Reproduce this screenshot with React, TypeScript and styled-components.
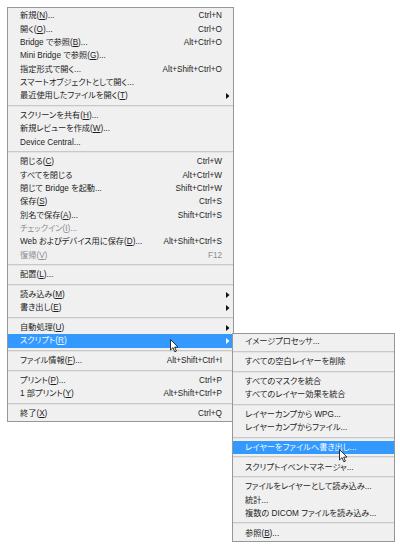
import React from "react";
import styled, { createGlobalStyle } from "styled-components";

const Global = createGlobalStyle`
  html, body { margin: 0; padding: 0; background: #ffffff; }
  body { font-family: "Liberation Sans", "Noto Sans CJK JP", sans-serif; }
`;

type Item =
  | { sep: true }
  | {
      sep?: false;
      label: React.ReactNode;
      shortcut?: string;
      arrow?: boolean;
      disabled?: boolean;
      active?: boolean;
    };

const Page = styled.div`
  padding: 7px 0 0 7px;
  width: 400px;
  height: 547px;
  box-sizing: border-box;
`;

const Stage = styled.div`
  position: relative;
  width: 227px;
`;

const Menu = styled.div<{ $width: number }>`
  width: ${(p) => p.$width}px;
  box-sizing: border-box;
  background: #f0f0f0;
  border: 1px solid #979797;
  padding: 1.3px 0 1px 0;
  display: flex;
  flex-direction: column;
`;

const SubMenuWrap = styled.div`
  position: absolute;
  left: 225px;
  top: 326px;
`;

const Row = styled.div<{ $active?: boolean; $disabled?: boolean }>`
  height: 13.333px;
  display: grid;
  grid-template-columns: 1fr auto 8px;
  align-items: center;
  padding: 0 3px 0 12px;
  font-size: 8.2px;
  font-feature-settings: "palt";
  line-height: 13.333px;
  white-space: nowrap;
  background: ${(p) => (p.$active ? "#3399ff" : "transparent")};
  color: ${(p) => (p.$active ? "#f4f9ff" : p.$disabled ? "#8d8d8d" : "#1e1e1e")};
`;

const Label = styled.span`
  overflow: visible;
`;

const Shortcut = styled.span`
  text-align: right;
  padding-left: 10px;
`;

const ArrowCell = styled.span`
  grid-column: 3;
  display: flex;
  justify-content: flex-end;
  align-items: center;
`;

const Separator = styled.div`
  height: 6.4px;
  display: flex;
  align-items: center;
`;

const SepLine = styled.div`
  flex: 1;
  height: 0;
  border-top: 1px solid #c8c8c8;
  border-bottom: 1px solid #e4e4e4;
`;

const Cursor = styled.svg<{ $x: number; $y: number }>`
  position: absolute;
  left: ${(p) => p.$x}px;
  top: ${(p) => p.$y}px;
  width: 9px;
  height: 14px;
  overflow: visible;
`;

const Arrow = ({ color }: { color: string }) => (
  <svg width="4" height="6" viewBox="0 0 4 6">
    <path d="M0 0 L3.5 3 L0 6 Z" fill={color} />
  </svg>
);

const U = styled.u`
  text-decoration: underline;
  text-underline-offset: 1px;
`;

const m = (pre: string, key: string, post = "") => (
  <>
    {pre}(<U>{key}</U>){post}
  </>
);

const mainItems: Item[] = [
  { label: m("新規", "N", "..."), shortcut: "Ctrl+N" },
  { label: m("開く", "O", "..."), shortcut: "Ctrl+O" },
  { label: m("Bridge で参照", "B", "..."), shortcut: "Alt+Ctrl+O" },
  { label: m("Mini Bridge で参照", "G", "...") },
  { label: "指定形式で開く...", shortcut: "Alt+Shift+Ctrl+O" },
  { label: "スマートオブジェクトとして開く..." },
  { label: m("最近使用したファイルを開く", "T"), arrow: true },
  { sep: true },
  { label: m("スクリーンを共有", "H", "...") },
  { label: m("新規レビューを作成", "W", "...") },
  { label: "Device Central..." },
  { sep: true },
  { label: m("閉じる", "C"), shortcut: "Ctrl+W" },
  { label: "すべてを閉じる", shortcut: "Alt+Ctrl+W" },
  { label: "閉じて Bridge を起動...", shortcut: "Shift+Ctrl+W" },
  { label: m("保存", "S"), shortcut: "Ctrl+S" },
  { label: m("別名で保存", "A", "..."), shortcut: "Shift+Ctrl+S" },
  { label: m("チェックイン", "I", "..."), disabled: true },
  { label: m("Web およびデバイス用に保存", "D", "..."), shortcut: "Alt+Shift+Ctrl+S" },
  { label: m("復帰", "V"), shortcut: "F12", disabled: true },
  { sep: true },
  { label: m("配置", "L", "...") },
  { sep: true },
  { label: m("読み込み", "M"), arrow: true },
  { label: m("書き出し", "E"), arrow: true },
  { sep: true },
  { label: m("自動処理", "U"), arrow: true },
  { label: m("スクリプト", "R"), arrow: true, active: true },
  { sep: true },
  { label: m("ファイル情報", "F", "..."), shortcut: "Alt+Shift+Ctrl+I" },
  { sep: true },
  { label: m("プリント", "P", "..."), shortcut: "Ctrl+P" },
  { label: m("1 部プリント", "Y"), shortcut: "Alt+Shift+Ctrl+P" },
  { sep: true },
  { label: m("終了", "X"), shortcut: "Ctrl+Q" },
];

const subItems: Item[] = [
  { label: "イメージプロセッサ..." },
  { sep: true },
  { label: "すべての空白レイヤーを削除" },
  { sep: true },
  { label: "すべてのマスクを統合" },
  { label: "すべてのレイヤー効果を統合" },
  { sep: true },
  { label: "レイヤーカンプから WPG..." },
  { label: "レイヤーカンプからファイル..." },
  { sep: true },
  { label: "レイヤーをファイルへ書き出し...", active: true },
  { sep: true },
  { label: "スクリプトイベントマネージャ..." },
  { sep: true },
  { label: "ファイルをレイヤーとして読み込み..." },
  { label: "統計..." },
  { label: "複数の DICOM ファイルを読み込み..." },
  { sep: true },
  { label: m("参照", "B", "...") },
];

const MenuList = ({ items, width }: { items: Item[]; width: number }) => (
  <Menu $width={width}>
    {items.map((it, i) =>
      it.sep ? (
        <Separator key={i}>
          <SepLine />
        </Separator>
      ) : (
        <Row key={i} $active={it.active} $disabled={it.disabled}>
          <Label>{it.label}</Label>
          {it.shortcut && <Shortcut>{it.shortcut}</Shortcut>}
          <ArrowCell>{it.arrow && <Arrow color={it.active ? "#ffffff" : "#111111"} />}</ArrowCell>
        </Row>
      )
    )}
  </Menu>
);

const Pointer = ({ x, y }: { x: number; y: number }) => (
  <Cursor $x={x} $y={y} viewBox="0 0 9 14">
    <path
      d="M0.5 0.5 L0.5 11 L3 8.6 L4.8 12.8 L6.4 12.1 L4.7 8.1 L8 8.1 Z"
      fill="#ffffff"
      stroke="#1a1a1a"
      strokeWidth="0.9"
      strokeLinejoin="round"
    />
  </Cursor>
);

export default function App() {
  return (
    <Page>
      <Global />
      <Stage>
        <MenuList items={mainItems} width={227} />
        <SubMenuWrap>
          <MenuList items={subItems} width={163} />
        </SubMenuWrap>
        <Pointer x={163} y={332} />
        <Pointer x={332} y={442} />
      </Stage>
    </Page>
  );
}
